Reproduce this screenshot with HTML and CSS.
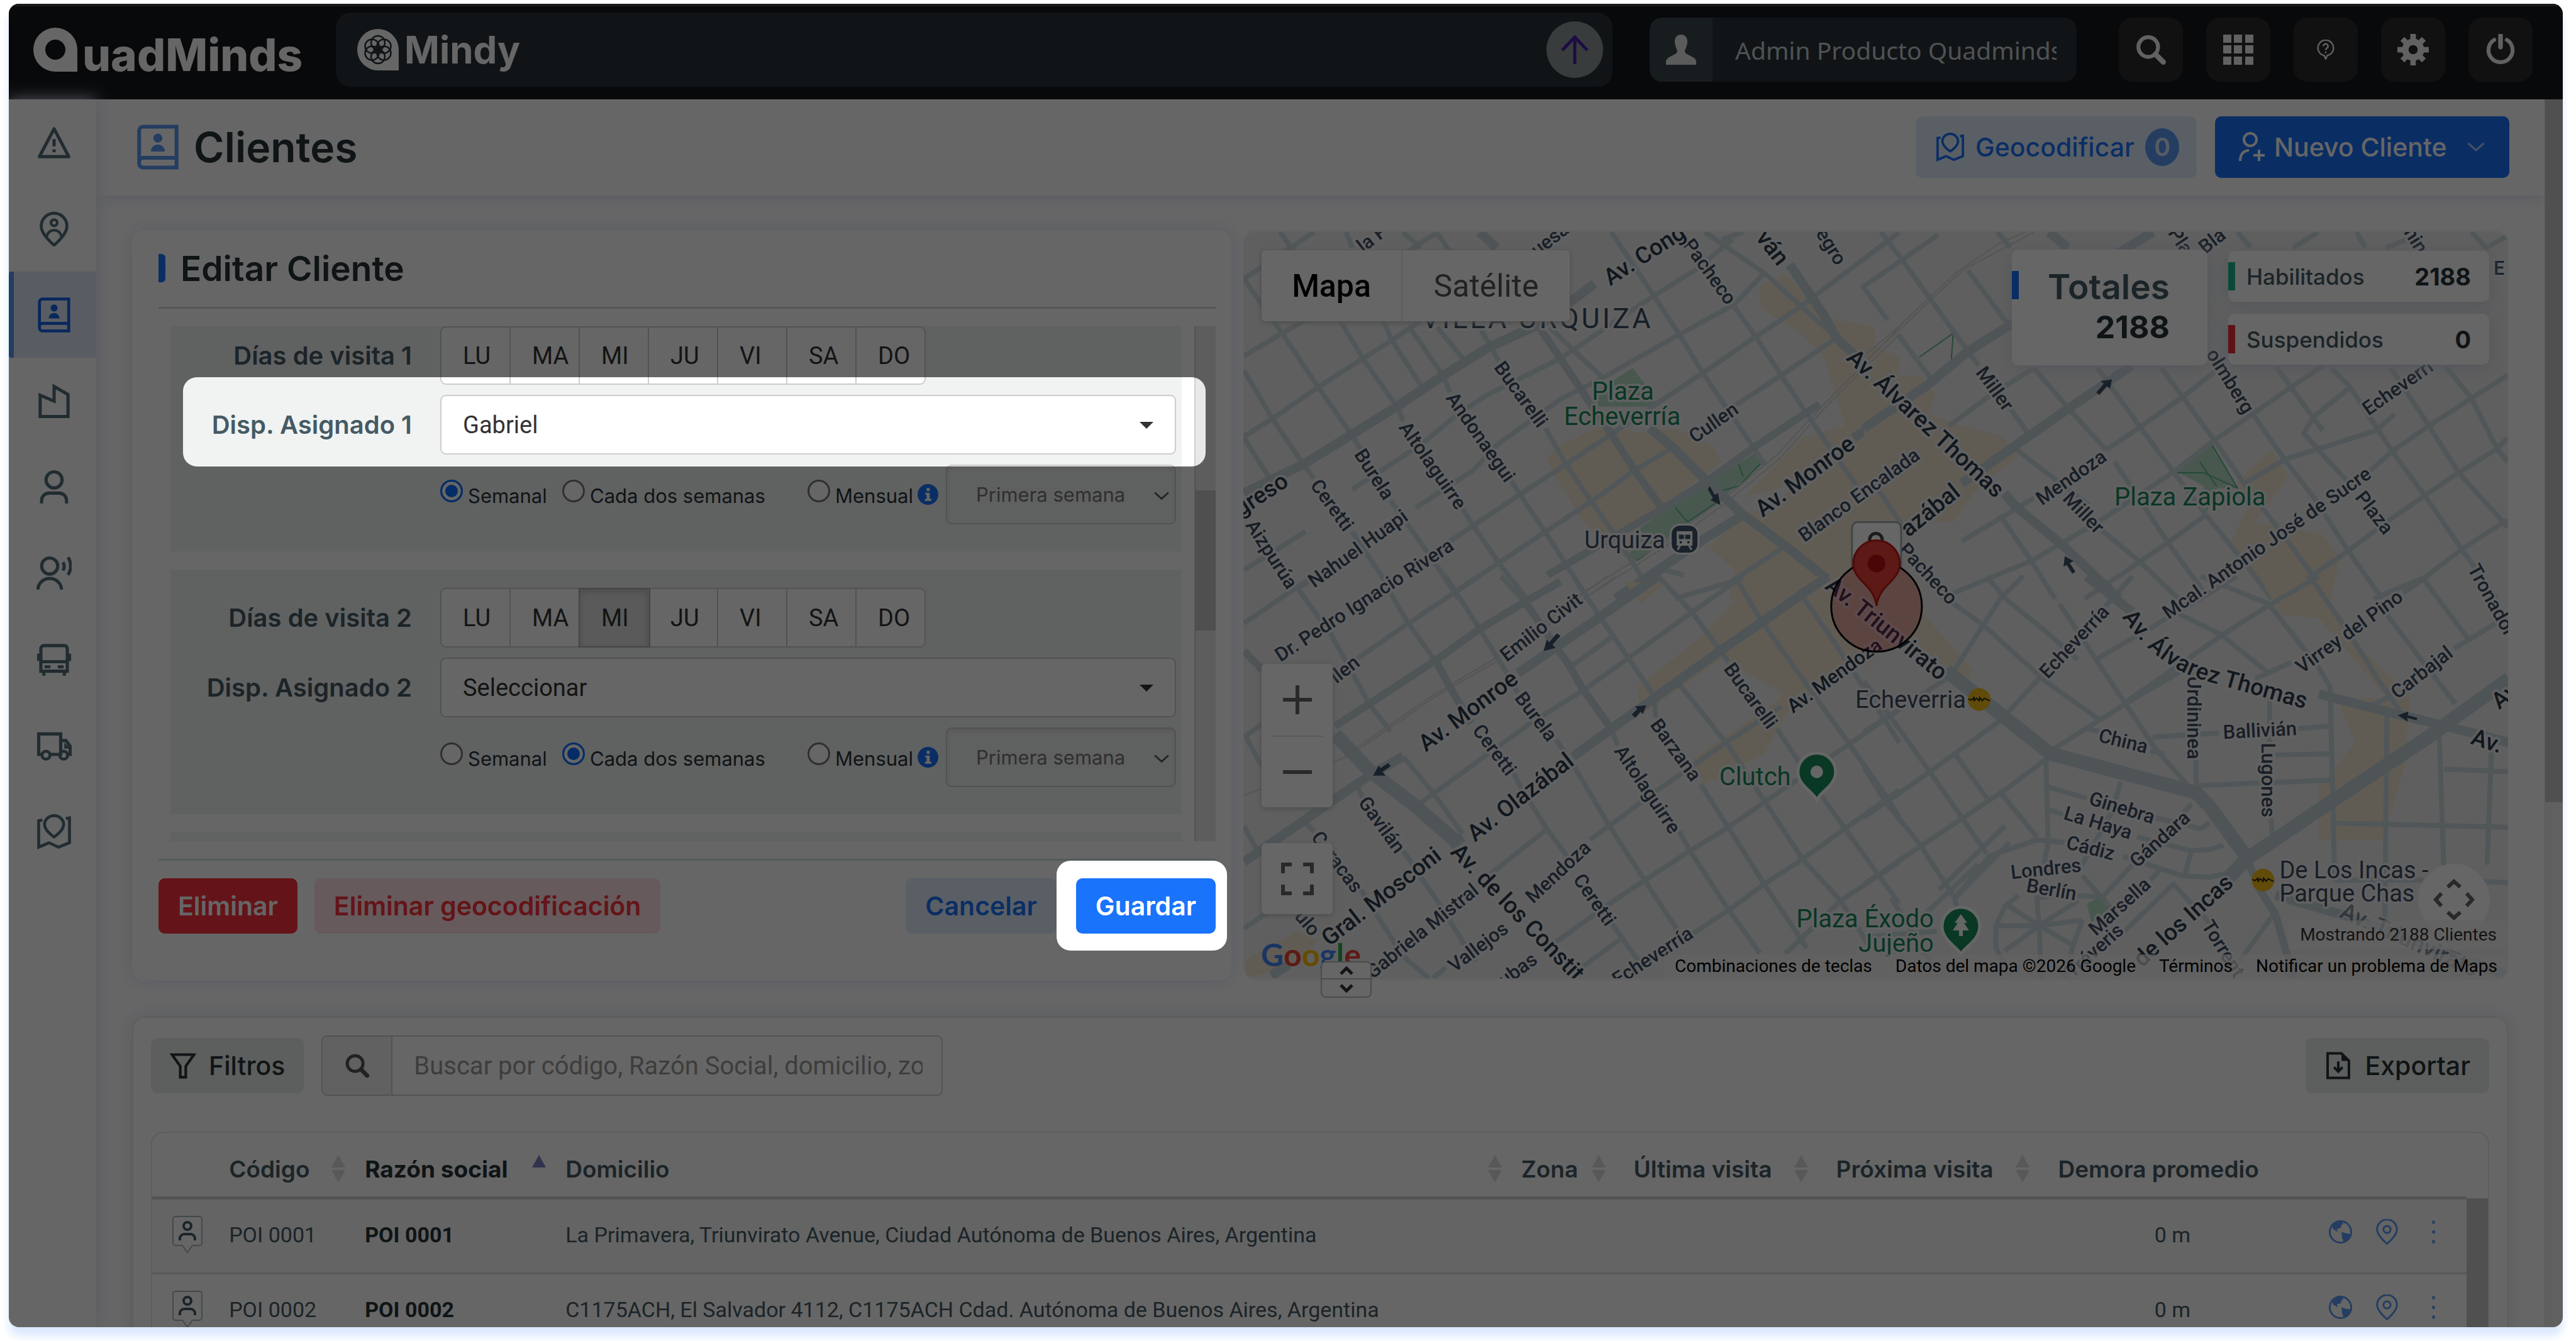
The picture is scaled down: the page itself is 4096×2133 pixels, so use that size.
FILE: index.html
```html
<!DOCTYPE html>
<html lang="es">
<head>
<meta charset="utf-8">
<title>QuadMinds - Clientes</title>
<link rel="stylesheet" href="styles.css">
</head>
<body>
<svg class="defs" aria-hidden="true">
  <symbol id="i-book" viewBox="0 0 24 26"><path d="M3.5 1.2H22.8V24.8H3.5A2.3 2.3 0 0 1 1.2 22.5V3.5A2.3 2.3 0 0 1 3.500 1.2ZM1.2 21.5A2.3 2.300 0 0 1 3.500 19.200H22.800" fill="none" stroke="currentColor" stroke-width="2.200"/><circle cx="12" cy="7.800" r="2.600" fill="currentColor"/><path d="M8 15.500a4 4 0 0 1 8 0z" fill="currentColor"/></symbol>
  <symbol id="i-search" viewBox="0 0 24 24"><circle cx="10" cy="10" r="7.500" fill="none" stroke="currentColor" stroke-width="3"/><path d="M15.500 15.500l6 6" stroke="currentColor" stroke-width="4" stroke-linecap="round"/></symbol>
  <symbol id="i-map" viewBox="0 0 24 24"><path d="M4 4 1.500 4.500V22.500L8.500 19.500 15 22.500 22.500 19.500V2.500L20 3" fill="none" stroke="currentColor" stroke-width="2"/><path d="M12 15.500S5.500 11.500 5.500 7a6.500 6 0 0 1 13 0c0 4.500-6.500 8.500-6.500 8.500z" fill="none" stroke="currentColor" stroke-width="2"/></symbol>
  <symbol id="i-user" viewBox="0 0 24 24"><circle cx="12" cy="7" r="5.500" fill="none" stroke="currentColor" stroke-width="2.200"/><path d="M3.500 23v-2a5 5 0 0 1 5-5h7a5 5 0 0 1 5 5v2" fill="none" stroke="currentColor" stroke-width="2.200"/></symbol>
  <symbol id="i-tag" viewBox="0 0 50 62"><path d="M6 2H44A4 4 0 0 1 48 6V44A4 4 0 0 1 44 48H33L25 59 17 48H6A4 4 0 0 1 2 44V6A4 4 0 0 1 6 2Z" fill="#fff" stroke="#a9b7b7" stroke-width="2"/><circle cx="25" cy="17" r="6" fill="none" stroke="#455a64" stroke-width="4"/><path d="M13 40v-3a7 7 0 0 1 7-7h10a7 7 0 0 1 7 7v3" fill="none" stroke="#455a64" stroke-width="4"/></symbol>
  <symbol id="i-globe" viewBox="0 0 24 24"><circle cx="12" cy="12" r="10.500" fill="none" stroke="currentColor" stroke-width="1.800"/><path d="M4 5 11 1.500l4 2-2.500 2.500v2L8.500 9l1 3-5-3zM13 12l5 1.500 4 .500-3 6-4 2-1.500-5z" fill="currentColor"/></symbol>
  <symbol id="i-pin" viewBox="0 0 24 26"><path d="M12 25S2 17 2 10.500a10 10 0 0 1 20 0C22 17 12 25 12 25z" fill="none" stroke="currentColor" stroke-width="1.900"/><circle cx="12" cy="10.500" r="3.600" fill="none" stroke="currentColor" stroke-width="1.900"/></symbol>
  <symbol id="i-sort" viewBox="0 0 24 44"><path d="M12 0 23 20H1zM12 44 1 24H23z" fill="#dcdcdc"/></symbol>
  <symbol id="i-chev" viewBox="0 0 24 14"><path d="M2 2l10 9L22 2" fill="none" stroke="currentColor" stroke-width="2.500"/></symbol>
  <symbol id="i-info" viewBox="0 0 24 24"><circle cx="12" cy="12" r="12" fill="currentColor"/><path d="M9 10h5v7h2v2.500H8.500V17h2v-4.500H9zM10.500 4.500h3.500v3.500h-3.500z" fill="#fff"/></symbol>
</svg>

<div class="window">
  <header class="topbar">
    <a class="logo" href="#" aria-label="QuadMinds">
      <svg viewBox="0 0 70 70"><path d="M35 0a35 35 0 1 0 0 70H70V35A35 35 0 0 0 35 0zM35 19a16 16 0 1 1 0 32 16 16 0 0 1 0-32z" fill="#fff" fill-rule="evenodd"/></svg><span>uadMinds</span>
    </a>
    <div class="mindy">
      <svg class="mindy-mark" viewBox="0 0 66 66"><path d="M33 0a33 33 0 1 0 0 66H66V33A33 33 0 0 0 33 0z" fill="#fff"/><g fill="none" stroke="#28343a" stroke-width="2.500"><circle cx="33" cy="33" r="6"/><circle cx="33" cy="22" r="11"/><circle cx="33" cy="44" r="11"/><circle cx="23.500" cy="27.500" r="11"/><circle cx="42.500" cy="27.500" r="11"/><circle cx="23.500" cy="38.500" r="11"/><circle cx="42.500" cy="38.500" r="11"/></g></svg>
      <span class="mindy-name">Mindy</span>
      <button class="send" aria-label="Enviar"><svg viewBox="0 0 44 46"><path d="M22 46V3M2 24 22 3l20 21" fill="none" stroke="#4a1fa8" stroke-width="5"/></svg></button>
    </div>
    <div class="account">
      <span class="account-icon"><svg viewBox="0 0 48 48"><path d="M24 0c7 0 10 5 10 11 0 7-3 11-4 15 0 4 4 5 9 8 6 3 9 5 9 9v5H0v-5c0-4 3-6 9-9 5-3 9-4 9-8-1-4-4-8-4-15C14 5 17 0 24 0z" fill="#e3e3e3"/></svg></span>
      <input class="account-name" type="text" value="Admin Producto Quadminds" aria-label="Usuario">
    </div>
    <nav class="tools">
      <button aria-label="Buscar"><svg class="t50"><use href="#i-search"/></svg></button>
      <button aria-label="Aplicaciones"><svg class="t48" viewBox="0 0 48 48"><path d="M0 0h13v13H0zM17 0h13v13H17zM35 0h13v13H35zM0 17h13v13H0zM17 17h13v13H17zM35 17h13v13H35zM0 35h13v13H0zM17 35h13v13H17zM35 35h13v13H35z" fill="currentColor"/></svg></button>
      <button aria-label="Ayuda"><svg class="t32" viewBox="0 0 24 26"><path d="M12 25l-2-4.500A10 10 0 1 1 14 20.500z" fill="none" stroke="currentColor" stroke-width="2"/><path d="M9 8.500a3 3 0 1 1 4.500 2.600c-1 .7-1.500 1.200-1.500 2.500M12 15.500v2" fill="none" stroke="currentColor" stroke-width="2"/></svg></button>
      <button aria-label="Configuración"><svg class="t50" viewBox="0 0 24 24"><path d="M12 3.500a8.500 8.500 0 1 0 0 17 8.500 8.500 0 0 0 0-17zm0 5a3.500 3.500 0 1 1 0 7 3.500 3.500 0 0 1 0-7z" fill="currentColor" fill-rule="evenodd"/><path d="M12 0v5M12 19v5M0 12h5M19 12h5M3.800 3.800l3.500 3.500M16.700 16.700l3.500 3.500M20.200 3.800l-3.500 3.500M7.300 16.700l-3.500 3.500" stroke="currentColor" stroke-width="4.200"/></svg></button>
      <button aria-label="Salir"><svg class="t50" viewBox="0 0 24 24"><path d="M7.200 4.500a9.200 9.200 0 1 0 9.600 0" fill="none" stroke="currentColor" stroke-width="3" stroke-linecap="round"/><path d="M12 1v9" stroke="currentColor" stroke-width="3.500" stroke-linecap="round"/></svg></button>
    </nav>
  </header>

  <div class="body">
    <nav class="sidebar">
      <a href="#" aria-label="Alertas"><svg viewBox="0 0 24 24"><path d="M12 2.500 22 21.500H2z" fill="none" stroke="currentColor" stroke-width="2.200" stroke-linejoin="round"/><path d="M12 9.500v5M12 16.500v2" stroke="currentColor" stroke-width="2.200"/></svg></a>
      <a href="#" aria-label="Puntos de interés"><svg viewBox="0 0 24 26"><path d="M12 25S2.500 17.500 2.500 11a9.500 9.500 0 0 1 19 0C21.500 17.500 12 25 12 25z" fill="none" stroke="currentColor" stroke-width="2.200"/><circle cx="12" cy="8.500" r="2.300" fill="none" stroke="currentColor" stroke-width="2"/><path d="M6.500 18.500C7.500 15.500 9.500 14 12 14s4.500 1.500 5.500 4.500" fill="none" stroke="currentColor" stroke-width="2"/></svg></a>
      <a href="#" class="active" aria-label="Clientes"><svg><use href="#i-book"/></svg></a>
      <a href="#" aria-label="Depósitos"><svg viewBox="0 0 24 24"><path d="M2.500 22.500V8L12 12V2l9.500 5.500v15z" fill="none" stroke="currentColor" stroke-width="2.200"/></svg></a>
      <a href="#" aria-label="Usuarios"><svg><use href="#i-user"/></svg></a>
      <a href="#" aria-label="Choferes"><svg viewBox="0 0 24 24"><circle cx="9" cy="7" r="5.500" fill="none" stroke="currentColor" stroke-width="2.200"/><path d="M1 23a8 7.500 0 0 1 16 0M18 4.500a5 5 0 0 1 0 5.500M21.500 1a11 11 0 0 1 0 12" fill="none" stroke="currentColor" stroke-width="2.200"/></svg></a>
      <a href="#" aria-label="Vehículos"><svg viewBox="0 0 24 24"><path d="M3 20V4.500A2 2 0 0 1 5 2.500H19A2 2 0 0 1 21 4.500V20zM3 13.500H21M1.500 8v5M22.500 8v5M5 20v3M19 20v3" fill="none" stroke="currentColor" stroke-width="2.200"/><path d="M5.500 16h4v2h-4zM14.500 16h4v2h-4z" fill="currentColor"/></svg></a>
      <a href="#" aria-label="Rutas"><svg viewBox="0 0 24 24"><path d="M4 18H1.500V4H16.500V18H9M16.500 8.500H20l3 4V18h-1.500" fill="none" stroke="currentColor" stroke-width="2.200"/><path d="M19 10l4 4h-4z" fill="currentColor"/><circle cx="6.500" cy="18.500" r="2.700" fill="none" stroke="currentColor" stroke-width="2"/><circle cx="18.500" cy="18.500" r="2.700" fill="none" stroke="currentColor" stroke-width="2"/></svg></a>
      <a href="#" aria-label="Mapa"><svg><use href="#i-map"/></svg></a>
    </nav>

    <main class="content">
      <div class="titlebar">
        <svg class="title-icon"><use href="#i-book"/></svg>
        <h1>Clientes</h1>
        <button class="btn soft-blue geo"><svg class="t46"><use href="#i-map"/></svg>Geocodificar<span class="count">0</span></button>
        <button class="btn blue new"><svg class="t48" viewBox="0 0 24 24"><circle cx="11" cy="6" r="5" fill="none" stroke="currentColor" stroke-width="2"/><path d="M3 23c0-5 2.500-8 7-8.500M18 14v9M13.500 18.500h9" fill="none" stroke="currentColor" stroke-width="2"/></svg>Nuevo Cliente<svg class="chev"><use href="#i-chev"/></svg></button>
      </div>

      <div class="panels">
        <section class="editor card">
          <h2>Editar Cliente</h2>
          <div class="scroller">
            <form class="visits">
              <fieldset class="visit cut">
                <div class="row"><span class="lbl">Días de visita 1</span>
                  <div class="days"><button type="button">LU</button><button type="button">MA</button><button type="button">MI</button><button type="button">JU</button><button type="button">VI</button><button type="button">SA</button><button type="button">DO</button></div></div>
                <div class="row"><label class="lbl" for="disp1">Disp. Asignado 1</label>
                  <span class="pick"><select id="disp1"><option>Gabriel</option></select></span></div>
                <div class="row freq"><span class="lbl"></span>
                  <label class="f1"><input type="radio" name="f1" checked>Semanal</label>
                  <label class="f2"><input type="radio" name="f1">Cada dos semanas</label>
                  <label class="f3"><input type="radio" name="f1">Mensual</label>
                  <svg class="info"><use href="#i-info"/></svg>
                  <span class="week"><select aria-label="Semana 1" disabled><option>Primera semana</option></select><svg><use href="#i-chev"/></svg></span></div>
              </fieldset>
              <fieldset class="visit">
                <div class="row"><span class="lbl">Días de visita 2</span>
                  <div class="days"><button type="button">LU</button><button type="button">MA</button><button type="button" class="on">MI</button><button type="button">JU</button><button type="button">VI</button><button type="button">SA</button><button type="button">DO</button></div></div>
                <div class="row"><label class="lbl" for="disp2">Disp. Asignado 2</label>
                  <span class="pick"><select id="disp2"><option>Seleccionar</option></select></span></div>
                <div class="row freq"><span class="lbl"></span>
                  <label class="f1"><input type="radio" name="f2">Semanal</label>
                  <label class="f2"><input type="radio" name="f2" checked>Cada dos semanas</label>
                  <label class="f3"><input type="radio" name="f2">Mensual</label>
                  <svg class="info"><use href="#i-info"/></svg>
                  <span class="week"><select aria-label="Semana 2" disabled><option>Primera semana</option></select><svg><use href="#i-chev"/></svg></span></div>
              </fieldset>
              <fieldset class="visit next"></fieldset>
            </form>
            <div class="vbar"><i></i></div>
          </div>
          <div class="actions">
            <button class="btn red">Eliminar</button>
            <button class="btn soft-red">Eliminar geocodificación</button>
            <span class="grow"></span>
            <button class="btn soft-blue">Cancelar</button>
            <button class="btn blue">Guardar</button>
          </div>
        </section>

        <section class="map">
          <svg class="streets" viewBox="0 0 2011 1186" preserveAspectRatio="xMinYMin slice">
            <defs><path id="thomas" d="M1406 604C1440 652 1480 688 1540 703L1720 754"/></defs>
            <rect width="2011" height="1190" fill="#eeeeee"/>
            <g class="nw" transform="translate(-16 -17) scale(.6749 .3824)">
              <path class="biz" d="M735 990 770 930 870 850 960 880 1040 860 1130 930 1150 1000 960 1250 930 1400 880 1360 820 1240zM1240 270 1300 220 1400 400 1510 440 1510 520 1568 560V760L1460 880 1530 980 1300 1100 1200 1150 1340 900 1440 850 1390 560 1330 460 1240 360zM1200 1230 1480 960 1568 850V1568H1170L1180 1450 1120 1350z"/>
              <path class="park" d="M940 610 980 700 1000 770 860 770 850 710zM1230 960 1245 1010 1150 1150 1070 1250 950 1410 930 1400 960 1270 1080 1130z"/>
              <path class="trail" d="M1240 1010 1190 1100 1150 1120M1190 1010 1200 1060M1145 1160 1070 1250 1040 1190M950 1410 990 1360"/>
              <path class="rail" d="M800 1568 1000 1350 1150 1160 1280 970 1380 780 1470 620 1568 440M825 1568 1010 1360 1160 1170 1290 980 1390 780 1480 620 1568 470"/>
              <path class="st" d="M110 45 140 120 230 350 305 570 385 770 400 830M540 1195 565 1265 625 1420 690 1568M25 240 115 465 200 690 280 890 300 950M370 1160 475 1420 530 1568M265 45 373 495 445 690M415 440 495 645 510 710M655 1080 675 1135 745 1320 835 1568M480 440 545 580M580 440 607 525 625 580M735 860 783 1010 843 1165 905 1320 965 1490M25 620 92 820 165 1010 190 1070M280 1290 370 1530M25 900 90 1080M745 440 800 535 870 650M890 45 990 310 1050 470 1105 630 1165 785 1225 940 1250 1010M1175 345 1230 480 1290 640 1350 800 1400 930 1480 1130 1530 1250M1110 45 1250 215 1335 350 1420 485M1480 265 1540 410M400 45 440 110M480 50 540 200"/>
              <path class="st" d="M25 560 115 465 230 350 300 270 440 90 480 50M25 895 92 820 200 690 305 570 373 495 440 415M25 240 190 45M25 1450 170 1290M430 1190 565 1035 620 930 770 740 870 650 1050 470 1180 345 1250 215M450 1400 565 1265 675 1135 783 1010 890 885 1000 755 1105 630 1230 480 1335 355 1568 45M280 1115 440 930 530 800 600 720 770 570 800 535 870 450 990 310 1090 200 1175 75M530 1530 625 1420 735 1290 843 1165 945 1035 1035 940M1165 785 1290 640 1420 485M1060 1470 1015 1450 970 1490M1040 1568 1170 1500 1300 1350M150 1530 250 1410M1200 45 1150 75"/>
              <path class="av2" d="M740 1470 1010 1195 1115 1080 1225 940 1380 760M720 440 770 570 830 730 890 885 945 1035 1010 1195"/>
              <path class="av" d="M25 1130 165 1010 280 885 385 770 495 640 600 525 730 420 850 260M980 860 1035 940 1115 1080 1200 1220 1300 1350 1400 1490 1460 1568M1310 180 1390 390 1420 485 1465 560M900 1568 1100 1330 1200 1220M1460 900 1568 780M580 45 620 110"/>
            </g>
            <g class="ne" transform="translate(986 -17) scale(.6749 .3824)">
              <path class="biz" d="M0 640H130L170 720 150 800 230 850 320 890 370 960 260 1130 210 1250 0 1250zM960 950 1000 1060 920 1250 1080 1300 1120 1400 1100 1568H950L860 1350 900 1200 880 1080z"/>
              <path class="park" d="M820 930 880 1110 830 1110 805 1215 800 1100 735 1040z"/>
              <path class="trail" d="M820 930 880 1110M735 1045 800 1045 880 1110M790 1000 830 1100M130 565 210 465 205 590 240 540M135 270 155 330"/>
              <path class="rail" d="M0 560 80 440 220 210 320 90 380 45M0 585 90 440 235 200 400 45"/>
              <path class="st" d="M0 270 90 160 175 55M200 850 300 720 400 610M230 1330 400 1150M570 950 650 855 750 730 830 620M180 1568 395 1410 560 1240 730 1040 825 910 915 800 1005 690 1080 600M520 1568 650 1415 715 1335 805 1220M895 1090 990 990 1205 870 1250 800M1190 1040 1240 960 1330 850 1430 735 1515 640M960 1568 1040 1490 1140 1370 1230 1250 1320 1140 1400 1045 1490 945 1515 900M1200 1568 1320 1480 1410 1360 1515 1240"/>
              <path class="st" d="M40 45 90 160 165 345 245 540 270 600M345 780 390 890M80 470 160 660M245 205 340 430M315 45 345 110M400 610 485 785 570 950M550 610 650 855 730 1045 805 1220 910 1450 960 1568M700 610 750 730 825 910 895 1090 985 1300 1060 1480M590 1000 715 1335 800 1540M915 800 990 990 1060 1150 1140 1370 1220 1568M970 605 1080 870M1100 610 1145 690 1245 960 1320 1140 1410 1370 1490 1568M1240 610 1330 850 1400 1045 1515 1270M1370 605 1430 735 1490 945 1515 1000M360 950 530 1180M560 1285 650 1415 740 1568M320 1220 395 1415 450 1568M20 1080 100 1290M1145 690 1060 810 1035 880 1095 1000 1160 1120M880 45 910 110M1010 110 1070 45M1160 45 1180 110M1230 110 1300 60M1430 45 1465 110 1515 60"/>
              <path class="av" d="M330 1130 360 1190 470 1350 600 1568M0 860 150 680 245 540 345 430 500 240 680 45M230 1090 390 890 480 780 630 600M435 45 480 110"/>
            </g>
            <g class="sw" transform="translate(-16 547) scale(.6749 .4409)">
              <path class="biz" d="M1200 60 1300 0H1568V200L1300 500 1250 640 1110 750 1080 660 1280 450 1290 420 1150 300 960 500 950 400 1100 220zM30 1380 150 1280 200 1310 150 1400 30 1450zM920 20H1020L960 100z"/>
              <path class="rail" d="M25 790 270 650 480 430 640 290 900 0M260 650 470 430 630 285 880 0"/>
              <path class="st" d="M25 170 150 40 190 0M25 580 90 510 412 170 530 50 580 0M430 830 600 640 700 530 830 405 930 295 1080 130 1200 0M800 320 895 215 860 140M600 1080 740 910M840 950 885 900 1000 770 1150 610 1290 470M740 1340 905 1160 970 1095 1075 990 1165 905 1250 815 1450 605 1568 480M820 1410 910 1310M1080 1290 1170 1200 1250 1110 1340 1020 1440 910 1568 770M1300 1360 1430 1170 1568 1030M25 1270 120 1170M470 1450 500 1410"/>
              <path class="st" d="M150 40 230 210 320 460 370 560M370 60 412 170 475 305M500 0 580 190 640 340 670 420M760 590 800 680 885 900 970 1100 1060 1310M630 0 690 100M800 0 860 140 930 295 990 430 995 510M890 550 905 610M1050 920 1075 990 1165 1200 1240 1360M1000 0 1080 130 1150 275 1165 310M1280 550 1370 760 1440 910 1520 1080 1568 1180M1050 390 1165 610 1250 810 1340 1020 1430 1170 1500 1340M1180 0 1245 165 1340 370 1450 605 1540 800 1568 870M1330 50 1420 250 1568 600M1100 750 1165 905 1250 1110 1350 1340M400 650 475 790 540 930M290 750 305 800M400 990 480 1170 570 1390M160 870 190 920M300 1130 400 1370 460 1450M660 710 680 770 740 915 800 1040M890 1250 960 1400M25 900 60 1000M30 580 80 720"/>
              <path class="av2" d="M240 540 320 460 475 305 580 190 690 90 770 20M690 100 735 200 790 320 820 400 890 550M475 300 510 400 560 530M25 270 70 340"/>
              <path class="av" d="M1000 0 870 140 670 350M400 650 330 710 290 750 25 1030M1400 0 1245 165 1150 265 890 550 800 650M540 940 510 970M130 1400 90 1440"/>
              <path class="hw" d="M240 570 320 700 430 830 520 950"/>
            </g>
            <g class="se" transform="translate(986 547) scale(.7226 .4409)">
              <path class="biz" d="M0 0H60L240 340 230 370 180 340 60 250 0 330zM880 40 970 0 1080 240 1200 430 1190 680 1140 950H1000V760L1080 600 1040 440H1150L1000 150 920 140z"/>
              <path class="park" d="M490 1180 520 1155 545 1190 500 1250z"/>
              <path class="st" d="M0 870 145 705 300 520 390 360M530 110 590 0M0 560 60 500 190 360 300 80 350 0M0 1110 310 770 400 660M165 1130 310 900M200 1160 275 1010 380 950 440 960M410 630 575 460 720 320M510 300 700 120 820 0M570 460 785 215 895 100 1000 0M860 370 940 310M1185 60 1240 0M1110 470 1160 430M1297 260 1330 230 1418 140"/>
              <path class="st" d="M0 690 50 820 120 960 200 1160M60 510 145 705 270 1000M0 380 60 510M190 90 265 180 400 380 520 520M200 640 270 800M270 0 310 80 400 200 470 300M430 100 510 300 575 460 640 620 720 770M660 110 785 210 890 350M740 0 890 100 1000 330 1025 400 1035 1100M980 0 1060 190 1130 370 1180 490M1150 480 1145 1240M1230 10 1330 230M1150 140 1300 460M1265 580 1275 1060M1380 620 1370 1040M720 320 725 360M730 660V770M892 430V600M895 870 898 950M635 580 780 565M950 550 1025 540M905 645 1030 640M730 755 1030 735M1035 890 1418 905M1275 695 1418 705M1035 1095H1230M1350 1100 1418 1105M490 550 520 560M630 630 660 640"/>
              <path class="st" d="M400 660 405 960 395 1040M405 760 490 800M640 870 740 910 760 890M300 780 380 940M405 840 440 860M600 940 720 990 760 985 790 970M570 1010 700 1080 760 1085 800 1070M565 740 545 850 480 1040M720 990 705 1080M720 820 700 860M650 1060 630 1095M590 1040 525 1155M200 1160 320 960M120 1240 250 1040M560 1300 680 1110 760 1250M385 1260 310 1180M385 1260 380 1160 430 1150 525 1155M385 1260 470 1170M385 1260 480 1240M385 1260 460 1330M385 1260 390 1450M385 1260 310 1350M385 1260H290L310 1190 340 1150M290 1260 290 1340 310 1400M480 1240 460 1330 440 1450M480 1080 540 1190M900 1220 820 1400M0 1300 160 1280M60 1160 150 1400M200 1160 205 1200"/>
              <path class="av" d="M1000 425 1130 480 1290 545 1418 600M490 0 590 130M905 1150 1050 1220 1418 1440"/>
              <path class="hw" d="M180 340 310 510 410 640 730 780 760 830 840 1010M840 1020 1030 810 1250 570 1290 520 1418 370M840 1020 800 1090"/>
              <path class="av2" d="M840 1010 870 1130 905 1220 945 1450"/>
            </g>

            <g class="minor">
              <text transform="translate(741 63) rotate(54)">Pacheco</text>
              <text transform="translate(934 23) rotate(58)">egro</text>
              <text transform="translate(195 17) rotate(-38)">e la P</text>
              <text transform="translate(480 17) rotate(-38)">guesa</text>
              <text transform="translate(441 258) rotate(54)">Bucarelli</text>
              <text transform="translate(377 326) rotate(55)">Andonaegui</text>
              <text transform="translate(301 371) rotate(55)">Altolaguirre</text>
              <text transform="translate(208 385) rotate(57)">Burela</text>
              <text transform="translate(141 434) rotate(54)">Ceretti</text>
              <text transform="translate(45 512) rotate(57)">Aizpurúa</text>
              <text transform="translate(182 503) rotate(-36)">Nahuel Huapi</text>
              <text transform="translate(192 585) rotate(-33)">Dr. Pedro Ignacio Rivera</text>
              <text transform="translate(747 303) rotate(-35)">Cullen</text>
              <text transform="translate(978 418) rotate(-36)">Blanco Encalada</text>
              <text transform="translate(1194 249) rotate(54)">Miller</text>
              <text transform="translate(1335 446) rotate(46)">Miller</text>
              <text transform="translate(1315 390) rotate(-35)">Mendoza</text>
              <text transform="translate(1088 543) rotate(47)">Pacheco</text>
              <text transform="translate(1568 237) rotate(58)">olmberg</text>
              <text transform="translate(1834 247) rotate(-35)">Echeverrí</text>
              <text transform="translate(1626 494) rotate(-35)">Mcal. Antonio José de Sucre</text>
              <text transform="translate(1797 446) rotate(52)">Plaza</text>
              <text transform="translate(1984 585) rotate(61)">Tronador</text>
              <text transform="translate(1863 13) rotate(58)">hin</text>
              <text transform="translate(1489 14) rotate(56)">Pla</text>
              <text transform="translate(1539 14) rotate(-38)">Bla</text>
              <text transform="translate(1995 57)">E</text>
              <text transform="translate(473 628) rotate(-38)">Emilio Civit</text>
              <text transform="translate(161 695) rotate(-38)">llen</text>
              <text transform="translate(465 770) rotate(53)">Burela</text>
              <text transform="translate(399 823) rotate(53)">Ceretti</text>
              <text transform="translate(220 942) rotate(54)">Gavilán</text>
              <text transform="translate(149 1001) rotate(53)">Caracas</text>
              <text transform="translate(102 1098) rotate(50)">ulo</text>
              <text transform="translate(687 823) rotate(54)">Barzana</text>
              <text transform="translate(642 886) rotate(56)">Altolaguirre</text>
              <text transform="translate(806 737) rotate(54)">Bucarelli</text>
              <text transform="translate(939 705) rotate(-36)">Av. Mendoza</text>
              <text transform="translate(284 1111) rotate(-39)">Gabriela Mistral</text>
              <text transform="translate(373 1136) rotate(-37)">Vallejos</text>
              <text transform="translate(436 1172) rotate(-36)">ubas</text>
              <text transform="translate(500 1017) rotate(-43)">Mendoza</text>
              <text transform="translate(558 1061) rotate(55)">Ceretti</text>
              <text transform="translate(650 1151) rotate(-33)">Echeverría</text>
              <text transform="translate(1320 651) rotate(-47)">Echeverría</text>
              <text transform="translate(1510 772) rotate(90)">Urdininea</text>
              <text transform="translate(1628 871) rotate(90)">Lugones</text>
              <text transform="translate(1615 792) rotate(-3)">Ballivián</text>
              <text transform="translate(1398 809) rotate(14)">China</text>
              <text transform="translate(1396 915) rotate(17)">Ginebra</text>
              <text transform="translate(1358 939) rotate(17)">La Haya</text>
              <text transform="translate(1346 979) rotate(14)">Cádiz</text>
              <text transform="translate(1275 1012) rotate(-6)">Londres</text>
              <text transform="translate(1284 1045) rotate(10)">Berlín</text>
              <text transform="translate(1456 965) rotate(-42)">Gándara</text>
              <text transform="translate(1392 1072) rotate(-42)">Marsella</text>
              <text transform="translate(1352 1142) rotate(-42)">Tréveris</text>
              <text transform="translate(1557 1139) rotate(58)">Torrent</text>
              <text transform="translate(1757 635) rotate(-36)">Virrey del Pino</text>
              <text transform="translate(1872 700) rotate(-38)">Carbajal</text>
            </g>
            <g class="major">
              <text transform="translate(637 36) rotate(-33)">Av. Cong</text>
              <text transform="translate(841 25) rotate(52)">ván</text>
              <text transform="translate(28 417) rotate(-33)">greso</text>
              <text transform="translate(892 388) rotate(-37)">Av. Monroe</text>
              <text transform="translate(1084 304) rotate(43)">Av. Álvarez Thomas</text>
              <text transform="translate(1091 442) rotate(-39)">azábal</text>
              <text transform="translate(357 761) rotate(-37)">Av. Monroe</text>
              <text transform="translate(440 898) rotate(-38)">Av. Olazábal</text>
              <text transform="translate(219 1056) rotate(-38)">Gral. Mosconi</text>
              <text transform="translate(436 1081) rotate(46)">Av. de los Constit</text>
              <text transform="translate(1022 630) rotate(39)">Av. Triunvirato</text>
              <text class="along"><textPath href="#thomas">Av. Álvarez Thomas</textPath></text>
              <text transform="translate(1493 1094) rotate(-42)">de los Incas</text>
              <text transform="translate(1976 809) rotate(18)">Av.</text>
              <text transform="translate(2004 737) rotate(-38)">Av</text>
              <text transform="translate(1853 1125) rotate(24)" opacity=".5">Av. Triunvirato</text>
            </g>
            <g class="place">
              <text class="area" x="467" y="137">VILLA URQUIZA</text>
              <text x="606" y="490">Urquiza</text>
              <text x="1060" y="743">Echeverria</text>
              <text class="from" x="1646" y="1014">De Los Incas -</text>
              <text class="from" x="1646" y="1051">Parque Chas</text>
              <text class="green" x="603" y="253">Plaza</text>
              <text class="green" x="602" y="293">Echeverría</text>
              <text class="green" x="1504" y="421">Plaza Zapiola</text>
              <text class="green" x="813" y="866">Clutch</text>
              <text class="green to" x="1097" y="1092">Plaza Éxodo</text>
              <text class="green to" x="1097" y="1131">Jujeño</text>
            </g>
            <g fill="#3e5166">
              <path d="M1380 234l-3 15-5-4-12 14-5-4 12-14-5-4zM1305 515l14 8-6 3 9 14-5 3-9-14-5 3zM741 404l8 14 5-3 4 19-16-8 4-3-8-14zM504 642l-13 14 5 5-19 5 5-18 4 4 12-14zM234 849l-13 9 5 6-20 0 9-16 3 4 12-8zM640 752l-5 14-4-4-8 10-6-5 9-9-4-4zM1864 776l-15-4 1 6-16-10 17-6-1 6 15 4z"/>
            </g>
            <rect x="679" y="465" width="44" height="46" rx="15" fill="#40546a" stroke="#fff" stroke-width="3"/>
            <path d="M690 477h22v20h-22zM694 498l-4 7M708 498l4 7" fill="#fff" stroke="#fff" stroke-width="3"/><path d="M692 481h8v7h-8zM702 481h8v7h-8z" fill="#40546a"/><circle cx="695" cy="493" r="2" fill="#40546a"/><circle cx="707" cy="493" r="2" fill="#40546a"/>
            <g fill="#f2bb14"><circle cx="1169" cy="743" r="18"/><circle cx="1620" cy="1030" r="18"/></g>
            <g fill="none" stroke="#222" stroke-width="2"><path d="M1152 742l4 2 5-4v5l4-4 4 4 1-5 4 5 3-4 9 4M1603 1029l4 2 5-4v5l4-4 4 4 1-5 4 5 3-4 9 4"/></g>
            <g stroke="#fff" stroke-width="5"><path fill="#188c5a" d="M911 903C905 889 881 880 881 858a30 30 0 0 1 60 0c0 22-24 31-30 45z"/><path fill="#188c5a" d="M1140 1148c-6-12-30-22-30-45a30 30 0 0 1 60 0c0 23-24 33-30 45z"/></g>
            <circle cx="911" cy="858" r="10" fill="#fff"/><path d="M1140 1084l10 14h-5l8 12h-10v9h-6v-9h-10l8-12h-5z" fill="#fff"/>

            <rect x="967" y="461" width="78" height="90" rx="9" fill="#fff" stroke="#a0adae" stroke-width="3"/>
            <circle cx="1005" cy="489" r="10" fill="none" stroke="#444" stroke-width="5"/>
            <path d="M966 535H1046A72 72 0 0 1 1006 667 72 72 0 0 1 966 535z" fill="#f0e4c8"/>
            <text class="over" transform="translate(1022 630) rotate(39)">Av. Triunvirato</text>
            <text class="over thin" transform="translate(939 705) rotate(-36)">Av. Mendoza</text>
            <circle cx="1006" cy="595" r="72" fill="#c80028" fill-opacity=".24" stroke="#000" stroke-width="3"/>
            <path d="M1006 594C1002 560 969 555 969 527a37 37 0 0 1 74 0c0 28-33 33-37 67z" fill="#e83f37" stroke="#c01a16" stroke-width="3"/><circle cx="1006" cy="527" r="14" fill="#b4100f"/>
          </svg>

          <div class="maptype"><button class="sel">Mapa</button><button>Satélite</button></div>
          <div class="totals">
            <div class="total"><span>Totales</span><b>2188</b></div>
            <div class="stats">
              <div class="stat ok"><span>Habilitados</span><b>2188</b></div>
              <div class="stat off"><span>Suspendidos</span><b>0</b></div>
            </div>
          </div>
          <div class="zoom"><button aria-label="Acercar"><svg viewBox="0 0 46 46"><path d="M23 0v46M0 23h46" stroke="#666" stroke-width="6"/></svg></button><button aria-label="Alejar"><svg viewBox="0 0 46 46"><path d="M0 23h46" stroke="#666" stroke-width="6"/></svg></button></div>
          <button class="full" aria-label="Pantalla completa"><svg viewBox="0 0 52 52"><path d="M3 17V3h14M35 3h14v14M49 35v14H35M17 49H3V35" fill="none" stroke="#666" stroke-width="6"/></svg></button>
          <div class="google" aria-label="Google"><span class="g1">G</span><span class="g2">o</span><span class="g3">o</span><span class="g1">g</span><span class="g4">l</span><span class="g2">e</span></div>
          <button class="pan" aria-label="Mover mapa"><svg viewBox="0 0 66 66"><path d="M23 13l10-9 10 9M23 53l10 9 10-9M13 23l-9 10 9 10M53 23l9 10-9 10" fill="none" stroke="#666" stroke-width="6"/></svg></button>
          <div class="showing">Mostrando 2188 Clientes</div>
          <div class="legal"><a href="#">Combinaciones de teclas</a><span>Datos del mapa ©2026 Google</span><a href="#">Términos</a><a href="#">Notificar un problema de Maps</a></div>
        </section>
        <div class="splitter"><button aria-label="Subir"><svg viewBox="0 0 24 14"><path d="M3 12l9-9 9 9" fill="none" stroke="#333" stroke-width="5"/></svg></button><button aria-label="Bajar"><svg viewBox="0 0 24 14"><path d="M3 2l9 9 9-9" fill="none" stroke="#333" stroke-width="5"/></svg></button></div>
      </div>

      <section class="list card">
        <div class="filters">
          <button class="btn gray"><svg class="t42" viewBox="0 0 24 24"><path d="M2 2H22L14.500 12.500V22.500H9.500V12.500z" fill="none" stroke="currentColor" stroke-width="2.400"/></svg>Filtros</button>
          <div class="search"><span><svg class="t40"><use href="#i-search"/></svg></span><input type="text" aria-label="Buscar" placeholder="Buscar por código, Razón Social, domicilio, zona"></div>
          <span class="grow"></span>
          <button class="btn gray"><svg class="t44" viewBox="0 0 24 26"><path d="M2 1.500H15L22 8.500V24.500H2zM12 9v9M8 14.500l4 4 4-4" fill="none" stroke="currentColor" stroke-width="2.400"/><path d="M15 1.500V8.500H22z" fill="currentColor"/></svg>Exportar</button>
        </div>
        <div class="tablebox">
          <table>
            <colgroup><col class="c1"><col class="c2"><col class="c3"><col class="c4"><col class="c5"><col class="c6"><col class="c7"><col class="c8"><col></colgroup>
            <thead><tr><th></th>
              <th><div class="near">Código<svg><use href="#i-sort"/></svg></div></th>
              <th class="strong"><div class="near">Razón social<svg viewBox="0 0 24 44"><path d="M12 0 23 20H1z" fill="#7f7cc9"/></svg></div></th>
              <th><div class="near">Domicilio<svg><use href="#i-sort"/></svg></div></th>
              <th><div>Zona<svg><use href="#i-sort"/></svg></div></th>
              <th><div>Última visita<svg><use href="#i-sort"/></svg></div></th>
              <th><div>Próxima visita<svg><use href="#i-sort"/></svg></div></th>
              <th><div>Demora promedio</div></th><th></th></tr></thead>
            <tbody>
              <tr><td><svg class="tag"><use href="#i-tag"/></svg></td><td>POI 0001</td><td class="strong">POI 0001</td><td>La Primavera, Triunvirato Avenue, Ciudad Autónoma de Buenos Aires, Argentina</td><td></td><td></td><td></td><td class="mid">0 m</td><td><div class="acts"><svg><use href="#i-globe"/></svg><svg><use href="#i-pin"/></svg><svg viewBox="0 0 24 24"><path d="M12 1v3M12 10.500v3M12 20v3" stroke="currentColor" stroke-width="2.500"/></svg></div></td></tr>
              <tr><td><svg class="tag"><use href="#i-tag"/></svg></td><td>POI 0002</td><td class="strong">POI 0002</td><td>C1175ACH, El Salvador 4112, C1175ACH Cdad. Autónoma de Buenos Aires, Argentina</td><td></td><td></td><td></td><td class="mid">0 m</td><td><div class="acts"><svg><use href="#i-globe"/></svg><svg><use href="#i-pin"/></svg><svg viewBox="0 0 24 24"><path d="M12 1v3M12 10.500v3M12 20v3" stroke="currentColor" stroke-width="2.500"/></svg></div></td></tr>
            </tbody>
          </table>
          <div class="tbar"></div>
        </div>
      </section>
    </main>
    <div class="pagebar"><i></i></div>
  </div>

  <svg class="dim" aria-hidden="true">
    <mask id="spots"><rect width="100%" height="100%" fill="#fff"/><rect x="277" y="594" width="1626" height="142" rx="22" fill="#000"/><rect x="1666" y="1363" width="271" height="143" rx="22" fill="#000"/></mask>
    <rect width="100%" height="100%" fill="#000" fill-opacity=".6" mask="url(#spots)"/>
  </svg>
</div>
</body>
</html>
```
FILE: styles.css
```css
* { box-sizing: border-box; }
body { margin: 0; height: 100vh; padding: 6px 21px 22px 14px; display: flex; background: #fff; font-family: "Inter", sans-serif; color: #263238; overflow: hidden; }
button, input, select { font: inherit; color: inherit; margin: 0; border: 0; background: none; padding: 0; }
button { cursor: pointer; }
a { color: inherit; text-decoration: none; }
svg { display: block; flex: none; }
.defs { position: absolute; width: 0; height: 0; }
.grow { flex: 1; }
.t32 { width: 32px; height: 32px; }
.t40 { width: 40px; height: 40px; }
.t42 { width: 42px; height: 42px; }
.t44 { width: 44px; height: 44px; }
.t46 { width: 46px; height: 46px; }
.t48 { width: 48px; height: 48px; }
.t50 { width: 50px; height: 50px; }

.window { position: relative; flex: 1; min-width: 0; display: flex; flex-direction: column; border-radius: 16px; overflow: hidden; background: #fff; box-shadow: 0 14px 14px #dbe9ff; }
.dim { position: absolute; z-index: 5; inset: 0; width: 100%; height: 100%; pointer-events: none; }

.topbar { flex: none; height: 152px; display: flex; align-items: center; padding: 0 48px 10px 39px; background: #15181c; border-top: 4px solid #3c4148; }
.logo { display: flex; align-items: flex-end; width: 481px; height: 70px; color: #fff; font-size: 71px; font-weight: 800; line-height: 54px; }
.logo svg { width: 70px; height: 70px; margin-right: 8px; }
.mindy { flex: 1; display: flex; align-items: center; height: 118px; padding: 0 15px 0 34px; border-radius: 24px; background: #28343a; color: #fff; }
.mindy-mark { width: 66px; height: 66px; margin-right: 9px; }
.mindy-name { flex: 1; font-size: 60px; font-weight: 700; line-height: 70px; }
.send { width: 90px; height: 90px; border-radius: 50%; background: #8f9698; display: grid; place-items: center; }
.send svg { width: 44px; height: 46px; }
.account { display: flex; width: 679px; height: 102px; margin: 0 67px 0 59px; border-radius: 20px; overflow: hidden; background: #28343a; }
.account-icon { width: 100px; display: grid; place-items: center; background: #3a464f; }
.account-icon svg { width: 48px; height: 48px; }
.account-name { flex: 1; min-width: 0; margin: 0 32px 0 36px; font-family: "Noto Sans", sans-serif; font-size: 39px; color: #c6cccf; }
.tools { display: flex; gap: 37px; }
.tools button { width: 102px; height: 102px; border-radius: 22px; background: #2b2b2b; color: #f2f2f2; display: grid; place-items: center; }

.body { flex: 1; min-height: 0; display: flex; background: #fff; }
.sidebar { position: relative; width: 139px; flex: none; box-shadow: 0 0 24px #dbe0f5; z-index: 1; background: #fff; }
.sidebar a { display: grid; place-items: center; height: 137px; padding-left: 4px; color: #546e7a; }
.sidebar .active { color: #1465e8; background: #dfe9f8; border-left: 8px solid #5a99f3; padding: 0 4px 0 0; border-radius: 4px 0 0 4px; }
.sidebar svg { width: 56px; height: 56px; }
.content { flex: 1; min-width: 0; overflow: hidden; }
.pagebar { width: 29px; flex: none; background: #f1f1f1; border-left: 1px solid #ddd; }
.pagebar i { display: block; height: 1118px; background: #c8c8c8; }

.titlebar { display: flex; align-items: center; height: 153px; padding: 0 56px 2px 65px; box-shadow: 0 0 30px #d8dcf0; }
.title-icon { width: 66px; height: 72px; color: #5a99f3; margin-right: 24px; }
h1 { flex: 1; margin: 0; font-size: 66px; font-weight: 600; line-height: 80px; }
.btn { flex: none; display: flex; align-items: center; height: 88px; padding: 0 31px; border-radius: 10px; font-size: 41px; font-weight: 600; line-height: 48px; white-space: nowrap; }
.blue { background: #1973fb; color: #fff; }
.soft-blue { background: #e1eefe; color: #1973fb; }
.red { background: #fb323e; color: #fff; }
.soft-red { background: #ffe1e5; color: #fb323e; }
.gray { background: #e5edea; color: #263238; gap: 20px; padding: 0 30px; }
.geo, .new { height: 98px; font-weight: 500; }
.geo { width: 447px; margin-right: 29px; padding: 0 28px 0 32px; justify-content: space-between; }
.new { width: 468px; padding: 0 38px 0 34px; gap: 12px; }
.count { width: 54px; height: 60px; border-radius: 50%; background: #5a99f3; color: #d9e6fb; display: grid; place-items: center; font-weight: 600; font-size: 39px; }
.chev { width: 30px; height: 18px; margin-left: auto; color: #a9c8f8; }

.card { background: #fff; border-radius: 20px; box-shadow: 0 0 30px #dfe4f6; }
.panels { position: relative; display: grid; grid-template-columns: 1748fr 2011fr; gap: 19px; padding: 55px 58px 57px 57px; }
.editor { height: 1194px; padding: 31px 25px 0 42px; }
h2 { margin: 0; display: flex; align-items: center; gap: 24px; height: 94px; padding-bottom: 32px; border-bottom: 3px solid #d6d6d6; font-size: 55px; font-weight: 600; line-height: 58px; }
h2::before { content: ""; width: 11px; height: 45px; border-radius: 0 6px 6px 0; background: #1973fb; }
.scroller { display: flex; justify-content: space-between; height: 819px; margin: 28px 0 28px 19px; overflow: hidden; }
.visits { flex: 1; margin-right: 20px; }
.visit { margin: 0 0 29px; padding: 29px 9px 43px 0; border: 0; min-width: 0; background: #f1f3f2; display: flex; flex-direction: column; gap: 16px; }
.visit.cut { padding-top: 0; }
.visit.cut .days { height: 93px; }
.visit.next { height: 60px; }
.vbar { width: 34px; background: #e8e8e8; border-left: 2px solid #cfcfcf; }
.vbar i { display: block; height: 223px; margin-top: 261px; background: #c6c6c6; }
.row { display: flex; align-items: center; }
.lbl { width: 384px; margin-right: 45px; text-align: right; color: #455a64; font-size: 40px; font-weight: 600; line-height: 48px; white-space: nowrap; }
.days { display: flex; width: 772px; height: 95px; border: 2px solid #ccc; border-radius: 9px; background: #fff; font-family: "Roboto", sans-serif; font-size: 38px; color: #333; }
.days button { flex: 1; padding-left: 34px; text-align: left; border-right: 2px solid #ccc; }
.days button:last-child { border-right: 0; }
.days .on { background: #e2e2e2; box-shadow: inset 0 4px 12px #bbb, 0 0 0 2px #adadad; }
.pick { position: relative; flex: 1; }
.pick select { width: 100%; height: 95px; padding: 0 34px; appearance: none; border: 2px solid #ccc; border-radius: 9px; background: #fff; font-family: "Roboto", sans-serif; font-size: 38px; color: #333; }
.pick::after { content: ""; position: absolute; right: 36px; top: 43px; border: 11px solid transparent; border-top-color: #333; border-bottom: 0; }
.freq { font-size: 31px; line-height: 36px; color: #263238; }
.freq label { display: flex; align-items: flex-end; gap: 8px; height: 44px; margin-bottom: 4px; white-space: nowrap; }
.freq .f1 { width: 194px; }
.freq .f2 { width: 390px; }
.freq .f3 { width: 175px; }
.freq label input { align-self: flex-start; width: 36px; height: 36px; flex: none; appearance: none; border: 3px solid #767676; border-radius: 50%; background: #fff; }
.freq label input:checked { border-color: #0b6fff; background: #0b6fff; box-shadow: inset 0 0 0 5px #fff; }
.info { width: 33px; height: 33px; color: #1973fb; }
.week { position: relative; flex: 1; margin-left: 12px; }
.week select { width: 100%; height: 95px; padding-left: 46px; appearance: none; border: 2px solid #ccc; border-radius: 9px; background: #eef0ef; color: #757575; opacity: 1; box-shadow: inset 0 4px 6px #ddd; }
.week svg { position: absolute; right: 10px; top: 42px; width: 26px; height: 16px; color: #555; }
.actions { display: flex; gap: 27px; padding-top: 28px; border-top: 3px solid #d2dfe6; }
.actions .soft-blue { margin-right: 4px; }

.map { position: relative; height: 1193px; border: 0 solid #f4f4f4; border-width: 3px 0; border-radius: 20px; overflow: hidden; }
.streets { width: 100%; height: 100%; }
.st, .av, .av2, .hw { fill: none; stroke: #cad7de; stroke-width: 8; vector-effect: non-scaling-stroke; stroke-linejoin: round; }
.av { stroke: #c5d2da; stroke-width: 15; }
.av2 { stroke: #c5d2da; stroke-width: 12; }
.hw { stroke: #c5d2da; stroke-width: 22; }
.rail { fill: none; stroke: #d2d2d2; stroke-width: 2; vector-effect: non-scaling-stroke; }
.trail { fill: none; stroke: #5fb48c; stroke-width: 2; vector-effect: non-scaling-stroke; }
.biz { fill: #f0e7d2; }
.park { fill: #b5dcc4; }
.streets text { font-family: "Roboto", sans-serif; text-anchor: middle; dominant-baseline: central; fill: #3c4d5f; stroke: #f2f3f4; stroke-width: 7; paint-order: stroke; stroke-linejoin: round; }
.streets .minor text, .streets .thin { font-size: 31px; font-weight: 500; }
.streets .major text, .streets .over { font-size: 37px; font-weight: 500; fill: #2c3b49; }
.streets .thin { font-size: 31px; }
.streets .major .along { text-anchor: start; }
.streets .place text { font-size: 38px; }
.streets .place .area { font-size: 45px; letter-spacing: 4px; }
.streets .place .from { text-anchor: start; }
.streets .place .to { text-anchor: end; }
.streets .place .green { fill: #188858; font-size: 40px; }

.maptype { position: absolute; left: 29px; top: 29px; display: flex; height: 113px; background: #fff; border-radius: 6px; box-shadow: 0 2px 10px #bbb; font-family: "Roboto", sans-serif; font-size: 50px; color: #565656; }
.maptype button { width: 266px; }
.maptype .sel { width: 224px; font-weight: 500; color: #000; border-right: 2px solid #e6e6e6; }
.totals { position: absolute; right: 30px; top: 28px; display: flex; gap: 33px; }
.total { width: 311px; height: 184px; padding: 27px 60px 0 0; background: linear-gradient(#1973fb, #1973fb) 0 34px / 11px 45px no-repeat #fff; border-radius: 10px; text-align: right; font-size: 55px; line-height: 64px; font-weight: 600; color: #455a64; display: flex; flex-direction: column; box-shadow: 0 4px 24px #cfd4e2; }
.total b { color: #263238; font-weight: 700; font-size: 50px; }
.stats { display: flex; flex-direction: column; gap: 19px; padding-top: 2px; }
.stat { display: flex; align-items: center; justify-content: space-between; width: 415px; height: 81px; padding: 0 29px; border-radius: 10px; background: #fff; font-size: 35px; font-weight: 500; color: #455a64; box-shadow: 0 4px 24px #cfd4e2; }
.stat b { font-size: 38px; font-weight: 700; color: #263238; }
.stat.ok { background: linear-gradient(#1fb591, #1fb591) 0 18px / 11px 45px no-repeat #fff; }
.stat.off { background: linear-gradient(#ee2c38, #ee2c38) 0 18px / 11px 45px no-repeat #fff; }
.zoom, .full { position: absolute; left: 29px; width: 113px; background: #fff; border-radius: 6px; box-shadow: 0 2px 10px #bbb; }
.zoom { top: 687px; display: flex; flex-direction: column; align-items: center; }
.zoom button { width: 84px; height: 114px; display: grid; place-items: center; }
.zoom button + button { border-top: 2px solid #e0e0e0; }
.zoom svg { width: 46px; height: 46px; }
.full { top: 972px; height: 113px; display: grid; place-items: center; }
.full svg { width: 52px; height: 52px; }
.google { position: absolute; left: 28px; top: 1119px; font-family: "Lato", sans-serif; font-size: 50px; line-height: 60px; font-weight: 700; }
.g1 { color: #4285f4; }
.g2 { color: #ea4335; }
.g3 { color: #fbbc04; }
.g4 { color: #34a853; }
.pan { position: absolute; right: 29px; top: 1005px; width: 114px; height: 114px; border-radius: 50%; background: #fff; display: grid; place-items: center; }
.pan svg { width: 66px; height: 66px; }
.showing { position: absolute; right: 0; top: 1095px; height: 46px; padding: 0 18px; background: rgba(245, 245, 245, .7); font-family: "Roboto", sans-serif; font-size: 28px; line-height: 46px; color: #333; }
.legal { position: absolute; right: 0; bottom: 0; display: flex; gap: 37px; height: 38px; padding: 0 17px; background: rgba(245, 245, 245, .7); font-family: "Roboto", sans-serif; font-size: 28px; line-height: 38px; color: #000; }
.splitter { position: absolute; left: 1947px; bottom: 30px; width: 81px; }
.splitter button { display: grid; place-items: center; width: 100%; height: 29px; border: 2px solid #bbb; background: #fff; border-radius: 8px 8px 0 0; }
.splitter button + button { border-top: 0; border-radius: 0 0 8px 8px; }
.splitter svg { width: 24px; height: 14px; }

.list { margin: 0 58px 0 57px; border: 2px solid #e3ebe9; padding: 28px 28px 0; }
.filters { display: flex; align-items: center; gap: 28px; margin-bottom: 57px; height: 96px; }
.filters .btn { font-weight: 500; }
.search { display: flex; width: 988px; height: 96px; border: 2px solid #ccc; border-radius: 9px; background: #fff; overflow: hidden; }
.search span { width: 111px; display: grid; place-items: center; background: #f2f2f2; border-right: 2px solid #ccc; color: #555; }
.search input { flex: 1; min-width: 0; margin: 0 30px 0 34px; font-family: "Roboto", sans-serif; font-size: 40px; }
.search input::placeholder { color: #9a9a9a; }
.tablebox { display: flex; height: 420px; border: 2px solid #e3ebe9; border-radius: 20px; }
table { flex: 1; min-width: 0; table-layout: fixed; border-collapse: collapse; font-size: 34px; align-self: flex-start; }
.c1 { width: 3.32%; } .c2 { width: 5.87%; } .c3 { width: 8.67%; } .c4 { width: 41.29%; } .c5 { width: 4.86%; } .c6 { width: 8.75%; } .c7 { width: 9.59%; } .c8 { width: 9.89%; }
th, td { padding: 0; text-align: left; white-space: nowrap; }
th { height: 103px; border-bottom: 5px solid #d3d3d3; color: #455a64; font-size: 37px; font-weight: 600; }
th div { display: flex; align-items: center; justify-content: space-between; padding: 14px 44px 0 0; }
th .near { padding-right: 30px; }
th svg { width: 24px; height: 44px; }
td { height: 120px; padding-bottom: 4px; border-bottom: 3px solid #d9d9d9; font-family: "Roboto", sans-serif; color: #455a64; }
tbody tr:first-child { background: #f9f9f9; }
th.strong, td.strong { color: #263238; font-weight: 700; }
.tag { width: 50px; height: 62px; margin-left: 31px; }
.mid { text-align: center; }
.acts { display: flex; align-items: center; gap: 35px; padding-left: 66px; padding-bottom: 8px; color: #5a99f3; }
.acts svg { width: 39px; height: 41px; }
.tbar { width: 34px; margin-top: 104px; background: #c8c8c8; }
```
